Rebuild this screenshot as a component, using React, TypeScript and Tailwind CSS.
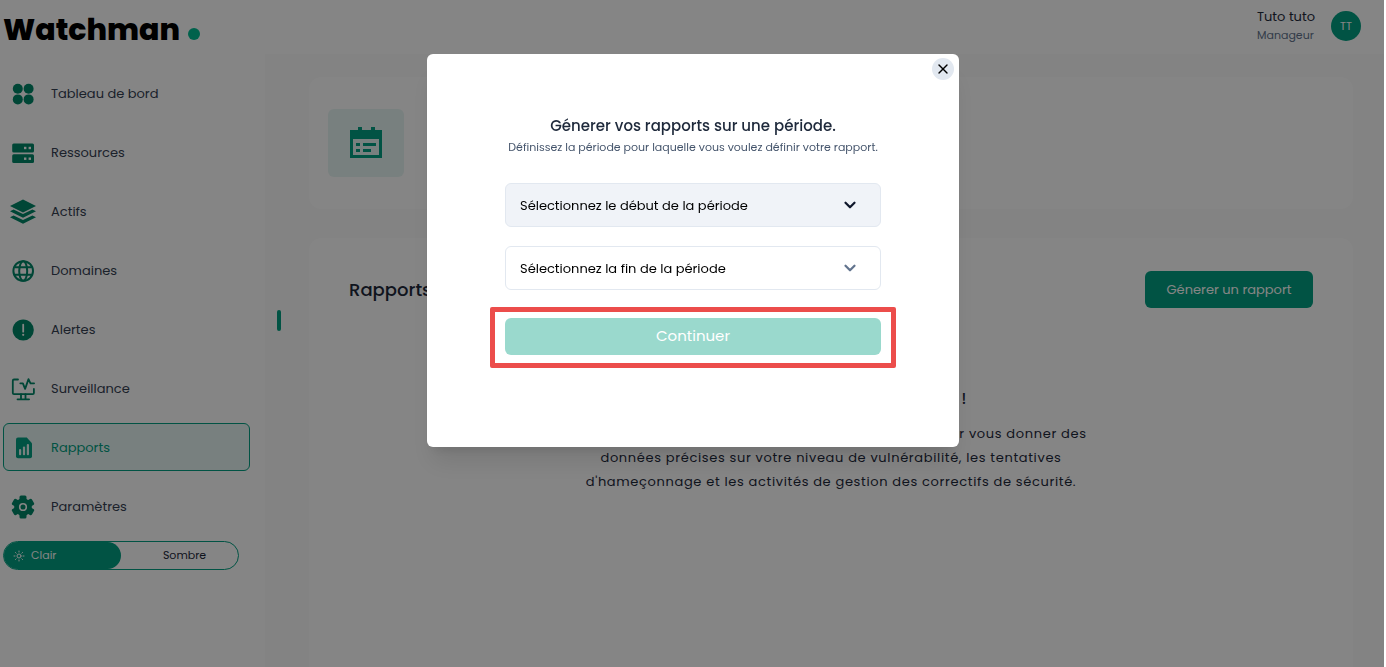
import type { ReactNode } from "react";
import { X, ChevronDown, Sun } from "lucide-react";

const navItems: { label: string; icon: ReactNode; active?: boolean }[] = [
  { label: "Tableau de bord", icon: <DashboardIcon /> },
  { label: "Ressources", icon: <ServerIcon /> },
  { label: "Actifs", icon: <LayersIcon /> },
  { label: "Domaines", icon: <GlobeIcon /> },
  { label: "Alertes", icon: <AlertIcon /> },
  { label: "Surveillance", icon: <MonitorIcon /> },
  { label: "Rapports", icon: <ReportIcon />, active: true },
  { label: "Paramètres", icon: <GearIcon /> },
];

export default function App() {
  return (
    <div className="mr-0.5 flex min-h-screen flex-col bg-white font-['Poppins','Inter',sans-serif] text-[#1e293b]">
      <Header />

      <div className="flex flex-1">
        <Sidebar />
        <ReportsPage />
      </div>

      <PeriodModal />
    </div>
  );
}

function Header() {
  return (
    <header className="flex h-[54px] items-center justify-between pr-[23px] pb-0.5 pl-[3px]">
      <div className="flex items-center gap-2 pt-2 text-black">
        <span className="text-[30px] leading-8 font-extrabold">Watchman</span>
        <span className="mt-2 size-3 rounded-full bg-[#00bc93]" />
      </div>

      <div className="flex items-center gap-4">
        <div>
          <p className="text-[13px] leading-[18px]">Tuto tuto</p>
          <p className="text-[11px] leading-[18px] text-slate-500">Manageur</p>
        </div>
        <span className="flex size-[30px] items-center justify-center rounded-full bg-[#02a082] text-[11px] text-white">
          TT
        </span>
      </div>
    </header>
  );
}

function Sidebar() {
  return (
    <aside className="w-[265px] shrink-0 pt-[15px] pl-[3px]">
      <nav className="flex w-[247px] flex-col gap-[11px]">
        {navItems.map((item) => (
          <a
            key={item.label}
            href="#"
            className={
              item.active
                ? "flex h-12 items-center gap-[14px] rounded-md border border-[#02a082] bg-[#e6f6f3] pt-px pl-[5px] text-[13px] text-[#02a082]"
                : "flex h-12 items-center gap-[14px] rounded-md border border-transparent pt-px pl-[5px] text-[13px] text-gray-700"
            }
          >
            <span className={item.active ? "text-[#02a082]" : "text-[#008768]"}>
              {item.icon}
            </span>
            {item.label}
          </a>
        ))}
      </nav>

      <div className="mt-[11px] flex h-[29px] w-[236px] rounded-full border border-[#02a082] text-[11px]">
        <button
          type="button"
          className="flex w-1/2 items-center gap-[6px] rounded-full bg-[#02a082] pl-[9px] text-white"
        >
          <Sun className="size-3" />
          Clair
        </button>
        <button type="button" className="flex-1 pl-[10px]">
          Sombre
        </button>
      </div>
    </aside>
  );
}

function ReportsPage() {
  return (
    <main className="relative flex flex-1 flex-col gap-[29px] bg-[#fbfbfb] pt-[23px] pr-[31px] pl-11">
      <span className="absolute top-64 left-3 h-[21px] w-1 rounded-xs bg-[#02a082]" />

      <section className="rounded-xl bg-white px-[19px] py-8">
        <div className="flex h-[68px] w-[76px] items-center justify-center rounded-md bg-[#e6f6f3] text-[#02a082]">
          <CalendarIcon />
        </div>
      </section>

      <section className="flex-1 rounded-t-xl bg-white pt-[33px] pr-10 pl-10">
        <div className="flex items-center justify-between">
          <h1 className="text-lg font-medium">Rapports</h1>
          <button
            type="button"
            className="h-[37px] w-[168px] rounded-md bg-[#02a082] text-[13px] text-white"
          >
            Génerer un rapport
          </button>
        </div>

        <div className="mt-[79px] text-center">
          <h2 className="text-[15px] leading-6 font-medium">
            Aucun rapport disponible à ce jour !
          </h2>
          <p className="mt-[11px] text-[13px] leading-6 tracking-wider">
            Vous pouvez générer un nouveau rapport détaillé pour vous donner des
            <br />
            données précises sur votre niveau de vulnérabilité, les tentatives
            <br />
            d'hameçonnage et les activités de gestion des correctifs de sécurité.
          </p>
        </div>
      </section>
    </main>
  );
}

function PeriodModal() {
  return (
    <div className="fixed inset-y-0 right-0.5 left-0 flex items-start justify-center bg-black/48 pt-[54px] pl-0.5">
      <div
        role="dialog"
        aria-modal="true"
        aria-labelledby="period-title"
        className="relative w-[532px] rounded-md bg-white px-[78px] pt-[60px] pb-[92px] shadow-xl"
      >
        <button
          type="button"
          aria-label="Fermer"
          className="absolute top-1 right-[5px] flex size-[22px] items-center justify-center rounded-full bg-slate-200 text-black"
        >
          <X className="size-4" strokeWidth={2} />
        </button>

        <div className="text-center">
          <h2
            id="period-title"
            className="text-[15px] leading-6 font-medium"
          >
            Génerer vos rapports sur une période.
          </h2>
          <p className="text-[11px] leading-[18px] whitespace-nowrap text-slate-600">
            Définissez la période pour laquelle vous voulez définir votre rapport.
          </p>
        </div>

        <form className="mt-[27px]">
          <div className="flex flex-col gap-[19px]">
            <PeriodSelect label="Sélectionnez le début de la période" focused />
            <PeriodSelect label="Sélectionnez la fin de la période" />
          </div>

          <div className="relative mt-7">
            <button
              type="button"
              className="block h-[37px] w-full rounded-md bg-[#9ad9cd] text-[15px] text-white"
            >
              Continuer
            </button>
            <span className="pointer-events-none absolute -inset-x-[15px] -top-[11px] -bottom-[13px] rounded-xs border-5 border-[#ec4d4b]" />
          </div>
        </form>
      </div>
    </div>
  );
}

function PeriodSelect({ label, focused }: { label: string; focused?: boolean }) {
  return (
    <div className="relative">
      <select
        aria-label={label}
        className={
          focused
            ? "block h-11 w-full appearance-none rounded-md border border-slate-200 bg-[#f0f3f8] px-[14px] pt-px text-[13px] text-black"
            : "block h-11 w-full appearance-none rounded-md border border-slate-200 bg-white px-[14px] pt-px text-[13px] text-black"
        }
      >
        <option>{label}</option>
      </select>
      <ChevronDown
        className={
          focused
            ? "pointer-events-none absolute top-[13px] right-[22px] size-[18px] text-slate-900"
            : "pointer-events-none absolute top-[13px] right-[22px] size-[18px] text-slate-500"
        }
        strokeWidth={3}
      />
    </div>
  );
}

function DashboardIcon() {
  return (
    <svg viewBox="0 0 28 28" className="size-7" fill="currentColor">
      <circle cx="8.8" cy="8.8" r="5" />
      <circle cx="19.6" cy="8.8" r="5" />
      <circle cx="8.8" cy="19.4" r="5" />
      <circle cx="19.6" cy="19.4" r="5" />
    </svg>
  );
}

function ServerIcon() {
  return (
    <svg viewBox="0 0 28 28" className="size-7" fill="currentColor">
      <rect x="3.2" y="4.6" width="21.8" height="8.8" rx="1.5" />
      <rect x="3.2" y="15.3" width="21.8" height="8.8" rx="1.5" />
      <g fill="#fff">
        <rect x="15" y="7.8" width="2.4" height="2.4" />
        <rect x="19.6" y="7.8" width="2.4" height="2.4" />
        <rect x="15" y="18.5" width="2.4" height="2.4" />
        <rect x="19.6" y="18.5" width="2.4" height="2.4" />
      </g>
    </svg>
  );
}

function LayersIcon() {
  return (
    <svg viewBox="0 0 28 28" className="size-7" fill="currentColor">
      <path d="M14 1.5 27 8 14 14.5 1 8Z" />
      <path d="M1 13.2 4.6 11.4 14 16 23.4 11.4 27 13.2 14 19.8Z" />
      <path d="M1 19.2 4.6 17.4 14 22 23.4 17.4 27 19.2 14 25.8Z" />
    </svg>
  );
}

function GlobeIcon() {
  return (
    <svg
      viewBox="0 0 28 28"
      className="size-7"
      fill="none"
      stroke="currentColor"
      strokeWidth="2"
    >
      <circle cx="14.2" cy="14" r="9.8" />
      <ellipse cx="14.2" cy="14" rx="4" ry="9.8" />
      <path d="M5.5 10.3h17.4M5.5 17.7h17.4" />
    </svg>
  );
}

function AlertIcon() {
  return (
    <svg viewBox="0 0 28 28" className="size-7">
      <circle cx="14.2" cy="14" r="10.6" fill="currentColor" />
      <path
        d="M14.2 8.7v7"
        stroke="#fff"
        strokeWidth="1.8"
        strokeLinecap="round"
      />
      <circle cx="14.2" cy="18.8" r="1.1" fill="#fff" />
    </svg>
  );
}

function MonitorIcon() {
  return (
    <svg
      viewBox="0 0 28 28"
      className="size-7"
      fill="none"
      stroke="currentColor"
      strokeWidth="1.8"
      strokeLinecap="round"
      strokeLinejoin="round"
    >
      <path d="M9 4.5H5a1.2 1.2 0 0 0-1.2 1.2v12.2A1.2 1.2 0 0 0 5 19.1h18.7a1.2 1.2 0 0 0 1.2-1.2V14" />
      <path d="M12 19.2v4.6M16.5 19.2v4.6M8.5 24.3h11.6" />
      <path d="M11.3 8.3h2.6l2.2 5.6 3.4-9.8 2 4.2h3.6" />
    </svg>
  );
}

function ReportIcon() {
  return (
    <svg viewBox="0 0 28 28" className="size-7" fill="currentColor">
      <path d="M9 3.5h8.8l5.2 5.7v13a2 2 0 0 1-2 2H9a2 2 0 0 1-2-2V5.5a2 2 0 0 1 2-2Z" />
      <g fill="#e6f6f3">
        <rect x="10" y="15" width="2.2" height="6.2" rx="1" />
        <rect x="13.9" y="12.5" width="2.2" height="8.7" rx="1" />
        <rect x="17.8" y="10" width="2.2" height="11.2" rx="1" />
      </g>
    </svg>
  );
}

function GearIcon() {
  return (
    <svg viewBox="0 0 28 28" className="size-7" fill="currentColor">
      <circle cx="14" cy="14" r="8.8" />
      <rect x="10.5" y="2.5" width="7" height="23" rx="1.5" />
      <rect
        x="10.5"
        y="2.5"
        width="7"
        height="23"
        rx="1.5"
        transform="rotate(60 14 14)"
      />
      <rect
        x="10.5"
        y="2.5"
        width="7"
        height="23"
        rx="1.5"
        transform="rotate(120 14 14)"
      />
      <circle cx="14" cy="14" r="3.3" fill="none" stroke="#fff" strokeWidth="1.6" />
    </svg>
  );
}

function CalendarIcon() {
  return (
    <svg viewBox="0 0 32 32" className="size-8">
      <path
        fill="currentColor"
        fillRule="evenodd"
        d="M8 0h4v3h9V0h4v3h7v28H0V3h8ZM3 12v16h26V12Z"
      />
      <path
        fill="currentColor"
        d="M6 16h4v3H6ZM13 16h13v3H13ZM6 22h4v3H6ZM13 22h8v3h-8Z"
      />
    </svg>
  );
}
